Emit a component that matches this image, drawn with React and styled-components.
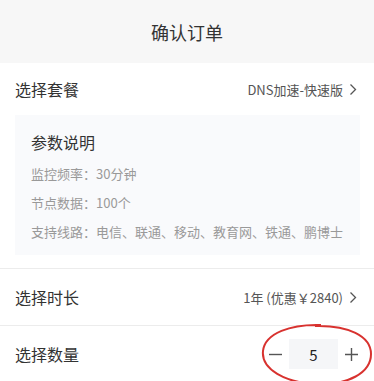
import React from "react";
import styled, { createGlobalStyle } from "styled-components";

const GlobalStyles = createGlobalStyle`
  body {
    margin: 0;
    background: #fff;
    font-family: "Noto Sans CJK SC", "Noto Sans", sans-serif;
    color: #333;
  }
`;

const specs = ["监控频率：30分钟", "节点数据：100个", "支持线路：电信、联通、移动、教育网、铁通、鹏博士"];

function Chevron() {
  return (
    <svg width="8" height="13" viewBox="0 0 8 13" fill="none">
      <path d="M1.5 1.5 L6.5 6.5 L1.5 11.5" stroke="#555" strokeWidth="1.3" />
    </svg>
  );
}

export default function App() {
  const [count, setCount] = React.useState(5);
  return (
    <Page>
      <GlobalStyles />
      <Header>确认订单</Header>
      <Section>
        <Row>
          <Label>选择套餐</Label>
          <Value>
            DNS加速-快速版 <Chevron />
          </Value>
        </Row>
        <InfoBox>
          <InfoTitle>参数说明</InfoTitle>
          {specs.map((s) => (
            <InfoLine key={s}>{s}</InfoLine>
          ))}
        </InfoBox>
      </Section>
      <Row divided>
        <Label>选择时长</Label>
        <Value>
          1年 (优惠￥2840) <Chevron />
        </Value>
      </Row>
      <Row divided>
        <Label>选择数量</Label>
        <Stepper>
          <StepBtn onClick={() => setCount(Math.max(1, count - 1))}>
            <svg width="13" height="13" viewBox="0 0 13 13">
              <path d="M0 6.5 H13" stroke="#555" strokeWidth="1.4" />
            </svg>
          </StepBtn>
          <Count>{count}</Count>
          <StepBtn onClick={() => setCount(count + 1)}>
            <svg width="13" height="13" viewBox="0 0 13 13">
              <path d="M0 6.5 H13 M6.5 0 V13" stroke="#555" strokeWidth="1.4" />
            </svg>
          </StepBtn>
          <Circle width="112" height="64" viewBox="0 0 112 64">
            <path
              d="M60 2 C30 1 4 10 2 28 C0 46 24 60 56 61 C87 62 110 50 110 31 C110 13 87 2 54 3"
              fill="none"
              stroke="#d8322f"
              strokeWidth="2"
            />
          </Circle>
        </Stepper>
      </Row>
    </Page>
  );
}

const Page = styled.div`
  width: 374px;
  height: 381px;
  overflow: hidden;
  background: #fff;
`;

const Header = styled.div`
  height: 63px;
  display: flex;
  align-items: center;
  justify-content: center;
  background: #f7f7f7;
  font-size: 18px;
  color: #333;
`;

const Section = styled.div`
  padding-bottom: 13px;
`;

const Row = styled.div`
  height: ${(p) => (p.divided ? "56px" : "52px")};
  padding: 0 16px 0 15px;
  display: flex;
  align-items: center;
  justify-content: space-between;
  border-top: ${(p) => (p.divided ? "1px solid #ececec" : "none")};
`;

const Label = styled.div`
  font-size: 16px;
  color: #333;
`;

const Value = styled.div`
  display: flex;
  align-items: center;
  gap: 6px;
  margin-right: 1px;
  font-size: 13px;
  color: #555;
`;

const InfoBox = styled.div`
  margin: 0 14px 0 15px;
  padding: 14px 16px 9px;
  background: #f9fafc;
`;

const InfoTitle = styled.div`
  font-size: 16px;
  color: #333;
  line-height: 26px;
  margin-bottom: 4px;
`;

const InfoLine = styled.div`
  font-size: 13px;
  color: #999;
  line-height: 29px;
`;

const Stepper = styled.div`
  position: relative;
  display: flex;
  align-items: center;
  gap: 7px;
`;

const StepBtn = styled.button`
  border: none;
  background: none;
  padding: 0;
  width: 13px;
  height: 30px;
  display: flex;
  align-items: center;
  justify-content: center;
  cursor: pointer;
`;

const Count = styled.div`
  width: 49px;
  height: 30px;
  display: flex;
  align-items: center;
  justify-content: center;
  background: #f5f6f8;
  font-size: 15px;
  color: #222;
`;

const Circle = styled.svg`
  position: absolute;
  left: -8px;
  top: -16px;
  pointer-events: none;
`;
